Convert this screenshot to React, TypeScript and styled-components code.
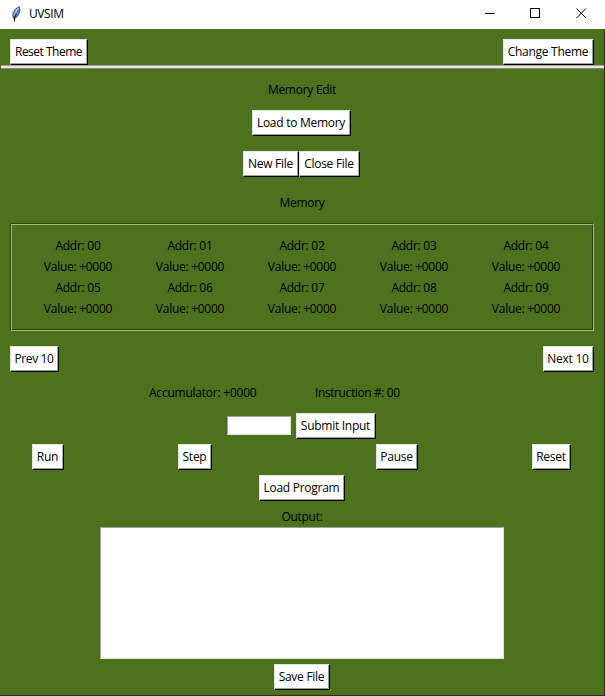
import React from "react";
import styled, { createGlobalStyle } from "styled-components";

const GlobalStyle = createGlobalStyle`
  * { box-sizing: border-box; }
  body { margin: 0; background: #4c721d; overflow: hidden; }
`;

const Window = styled.div`
  width: 605px;
  height: 696px;
  display: flex;
  flex-direction: column;
  background: #4c721d;
  border-right: 1px solid #25301a;
  border-bottom: 1px solid #25301a;
  font-family: "Open Sans", "Noto Sans", sans-serif;
  font-size: 12px;
  line-height: 16px;
  letter-spacing: -0.27px;
  color: #000;
`;

const TitleBar = styled.header`
  height: 29px;
  flex: none;
  margin-right: -1px;
  padding: 0 18px 2px 10px;
  display: flex;
  align-items: center;
  background: #fff;
`;

const Title = styled.span`
  margin-left: 7px;
  flex: 1;
  letter-spacing: -0.4px;
`;

const Controls = styled.div`
  display: flex;
  gap: 35px;
  svg { display: block; }
`;

const Row = styled.div<{ $mt?: number; $justify?: string; $px?: number; $pr?: number }>`
  display: flex;
  flex: none;
  align-items: center;
  justify-content: ${(p) => p.$justify ?? "center"};
  margin-top: ${(p) => p.$mt ?? 0}px;
  padding: 0 ${(p) => p.$pr ?? p.$px ?? 0}px 0 ${(p) => p.$px ?? 0}px;
`;

const TkButton = styled.button<{ $w: number; $ml?: number; $ls?: number }>`
  width: ${(p) => p.$w}px;
  height: 26px;
  margin: 0 0 0 ${(p) => p.$ml ?? 0}px;
  padding: 0 1px 1px 0;
  flex: none;
  display: flex;
  align-items: center;
  justify-content: center;
  background: #fff;
  border: 1px solid;
  border-color: #e3e3e3 #000 #000 #e3e3e3;
  box-shadow: inset -1px -1px 0 #a0a0a0;
  border-radius: 0;
  font: inherit;
  color: inherit;
  letter-spacing: ${(p) => p.$ls ?? -0.27}px;
  white-space: nowrap;
`;

const Separator = styled.div`
  height: 4px;
  flex: none;
  margin-left: 1px;
  background: linear-gradient(#a39e98 0 1px, #e9e5df 1px 3px, #8a857d 3px 4px);
`;

const Label = styled.div<{ $mt: number }>`
  flex: none;
  height: 16px;
  margin-top: ${(p) => p.$mt}px;
  text-align: center;
`;

const MemoryFrame = styled.section`
  height: 108px;
  flex: none;
  margin: 12px 10px 0;
  border: 1px solid;
  border-color: #2d4411 #a5b88e #a5b88e #2d4411;
`;

const MemoryInner = styled.div`
  height: 106px;
  border: 1px solid;
  border-color: #a5b88e #2d4411 #2d4411 #a5b88e;
  padding: 10px;
  display: grid;
  grid-template-columns: repeat(5, 112px);
  grid-auto-rows: 42px;
`;

const Cell = styled.div`
  display: flex;
  flex-direction: column;
  align-items: center;
  line-height: 21px;
  white-space: nowrap;
`;

const Status = styled.span<{ $ml: number; $w: number; $ls?: number }>`
  margin-left: ${(p) => p.$ml}px;
  width: ${(p) => p.$w}px;
  letter-spacing: ${(p) => p.$ls ?? -0.23}px;
  white-space: nowrap;
`;

const Entry = styled.input`
  width: 64px;
  height: 19px;
  margin-bottom: 1px;
  padding: 0 2px;
  background: #fff;
  border: 1px solid;
  border-color: #a0a0a0 #e3e3e3 #e3e3e3 #a0a0a0;
  border-radius: 0;
  outline: none;
`;

const Output = styled.textarea`
  display: block;
  width: 404px;
  height: 132px;
  flex: none;
  margin: 2px 0 0 100px;
  background: #fff;
  border: 1px solid;
  border-color: #a0a0a0 #e3e3e3 #e3e3e3 #a0a0a0;
  border-radius: 0;
  resize: none;
  outline: none;
`;

const Feather = () => (
  <svg width="12" height="16" viewBox="0 0 12 16">
    <path d="M3.8 12.5C1.4 9.5 3.5 3 9.2.8C11 3.5 8.8 10.5 5.2 12.2Z" fill="#578cca" stroke="#333" strokeWidth=".8" />
    <path d="M4.3 10.5C4.5 7.5 6.2 4.3 8.5 2" fill="none" stroke="#a9cef5" strokeWidth="1.2" />
    <path d="M4.5 15.5V11.3L6.3 8" fill="none" stroke="#111" strokeWidth="1.1" />
  </svg>
);

const addresses = ["00", "01", "02", "03", "04", "05", "06", "07", "08", "09"];

export default function App() {
  return (
    <>
      <GlobalStyle />
      <Window>
        <TitleBar>
          <Feather />
          <Title>UVSIM</Title>
          <Controls>
            <svg width="11" height="11" shapeRendering="crispEdges"><path d="M1 5.5H11" stroke="#000" /></svg>
            <svg width="11" height="11" shapeRendering="crispEdges"><rect x=".5" y=".5" width="9" height="9" fill="none" stroke="#000" /></svg>
            <svg width="11" height="11"><path d="M.5 .5L10 10M10 .5L.5 10" stroke="#000" /></svg>
          </Controls>
        </TitleBar>
        <Row $mt={10} $px={10} $justify="space-between">
          <TkButton $w={78} $ls={-0.5}>Reset Theme</TkButton>
          <TkButton $w={91}>Change Theme</TkButton>
        </Row>
        <Separator />
        <Label $mt={13}>Memory Edit</Label>
        <Row $mt={12} $pr={1}><TkButton $w={99}>Load to Memory</TkButton></Row>
        <Row $mt={15} $pr={1}>
          <TkButton $w={56}>New File</TkButton>
          <TkButton $w={61}>Close File</TkButton>
        </Row>
        <Label $mt={18}>Memory</Label>
        <MemoryFrame>
          <MemoryInner>
            {addresses.map((a) => (
              <Cell key={a}>
                <span>Addr: {a}</span>
                <span>Value: +0000</span>
              </Cell>
            ))}
          </MemoryInner>
        </MemoryFrame>
        <Row $mt={15} $px={10} $justify="space-between">
          <TkButton $w={49} $ls={-0.4}>Prev 10</TkButton>
          <TkButton $w={51}>Next 10</TkButton>
        </Row>
        <Row $mt={13} $justify="flex-start">
          <Status $ml={149} $w={108}>Accumulator: +0000</Status>
          <Status $ml={58} $w={86} $ls={-0.4}>Instruction #: 00</Status>
        </Row>
        <Row $mt={12} $justify="flex-start" $px={227}>
          <Entry aria-label="Input" />
          <TkButton $w={80} $ml={5}>Submit Input</TkButton>
        </Row>
        <Row $mt={5} $justify="flex-start">
          <TkButton $w={32} $ml={32}>Run</TkButton>
          <TkButton $w={34} $ml={114}>Step</TkButton>
          <TkButton $w={42} $ml={164}>Pause</TkButton>
          <TkButton $w={39} $ml={114}>Reset</TkButton>
        </Row>
        <Row $mt={5}><TkButton $w={86}>Load Program</TkButton></Row>
        <Label $mt={8}>Output:</Label>
        <Output aria-label="Output" />
        <Row $mt={5}><TkButton $w={56}>Save File</TkButton></Row>
      </Window>
    </>
  );
}
